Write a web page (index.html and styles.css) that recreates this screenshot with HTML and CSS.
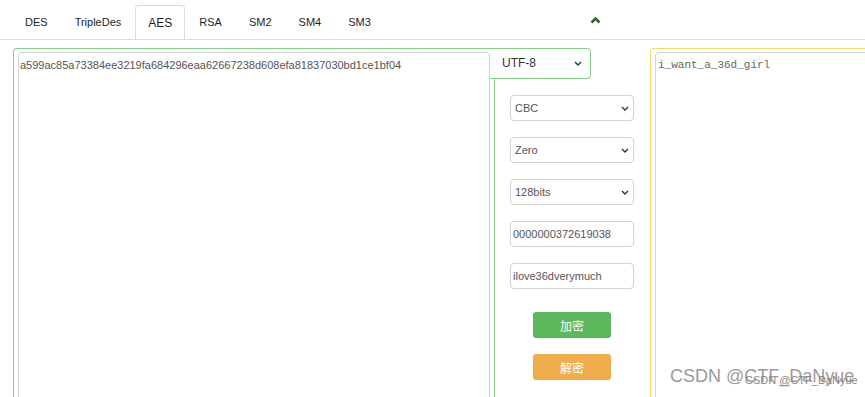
FILE: index.html
```html
<!DOCTYPE html>
<html lang="zh-CN">
<head>
    <meta charset="UTF-8">
    <meta name="viewport" content="width=device-width, initial-scale=1.0">
    <title>在线加密解密</title>
    <link rel="stylesheet" href="styles.css">
</head>
<body>
    <ul class="nav-tabs">
        <li><a href="#">DES</a></li>
        <li><a href="#">TripleDes</a></li>
        <li class="active"><a href="#">AES</a></li>
        <li><a href="#">RSA</a></li>
        <li><a href="#">SM2</a></li>
        <li><a href="#">SM4</a></li>
        <li><a href="#">SM3</a></li>
        <li class="toggle">
            <svg width="11" height="8" viewBox="0 0 11 8"><polyline points="1.5,6.5 5.5,2.5 9.5,6.5" fill="none" stroke="#2a6633" stroke-width="2.6"/></svg>
        </li>
    </ul>

    <div class="workspace">
        <div class="input-panel">
            <textarea class="text-box">a599ac85a73384ee3219fa684296eaa62667238d608efa81837030bd1ce1bf04</textarea>
        </div>

        <div class="side">
            <div class="charset-box">
                <span>UTF-8</span>
                <svg width="8" height="5" viewBox="0 0 8 5"><polyline points="1,1 4,4 7,1" fill="none" stroke="#333" stroke-width="1.4"/></svg>
            </div>
            <div class="options">
                <div class="field select"><span>CBC</span><svg width="8" height="5" viewBox="0 0 8 5"><polyline points="1,1 4,4 7,1" fill="none" stroke="#333" stroke-width="1.4"/></svg></div>
                <div class="field select"><span>Zero</span><svg width="8" height="5" viewBox="0 0 8 5"><polyline points="1,1 4,4 7,1" fill="none" stroke="#333" stroke-width="1.4"/></svg></div>
                <div class="field select"><span>128bits</span><svg width="8" height="5" viewBox="0 0 8 5"><polyline points="1,1 4,4 7,1" fill="none" stroke="#333" stroke-width="1.4"/></svg></div>
                <input class="field" type="text" value="0000000372619038">
                <input class="field" type="text" value="ilove36dverymuch">
                <button class="btn btn-encrypt">加密</button>
                <button class="btn btn-decrypt">解密</button>
            </div>
        </div>

        <div class="output-panel">
            <textarea class="text-box mono">i_want_a_36d_girl</textarea>
        </div>
    </div>

    <div class="watermark">
        <span class="mark-big">CSDN @CTF_DaNyue</span>
        <span class="mark-small">CSDN @CTF_DaNyue</span>
    </div>
</body>
</html>
```

FILE: styles.css
```css
body {
    font-family: 'Liberation Sans', Arial, 'Noto Sans CJK SC', sans-serif;
    margin: 0;
    height: 397px;
    overflow: hidden;
    background: #fff;
    color: #333;
    position: relative;
}
.nav-tabs {
    list-style: none;
    margin: 0;
    padding: 5px 0 0 12px;
    display: flex;
    border-bottom: 1px solid #dcdcdc;
    height: 34px;
}
.nav-tabs li {
    margin-right: 1px;
}
.nav-tabs a {
    display: flex;
    align-items: center;
    height: 34px;
    box-sizing: border-box;
    padding: 0 12px 1px;
    font-size: 11px;
    color: #1e1e1e;
    text-decoration: none;
    border: 1px solid transparent;
    border-bottom: none;
    border-radius: 4px 4px 0 0;
}
.nav-tabs .active a {
    border-color: #dcdcdc;
    font-size: 12px;
    padding-top: 2px;
}
.nav-tabs .toggle {
    margin-left: 205px;
    padding-top: 5px;
}
.workspace {
    display: flex;
    margin-top: 8px;
    padding-left: 13px;
}
.input-panel {
    flex-shrink: 0;
    width: 477px;
    box-sizing: border-box;
    border-left: 1px solid #88cf88;
    border-top: 1px solid #88cf88;
    border-top-left-radius: 4px;
    padding: 3px 0 0 4px;
}
.text-box {
    display: block;
    width: 472px;
    height: 360px;
    box-sizing: border-box;
    border: 1px solid #d2d2d2;
    border-radius: 4px;
    padding: 6px 1px;
    resize: none;
    font-family: 'Liberation Sans', Arial, sans-serif;
    font-size: 11px;
    line-height: 13px;
    color: #555;
    outline: none;
}
.text-box.mono {
    width: 230px;
    font-family: 'Liberation Mono', 'Courier New', monospace;
    padding: 6px 2px;
    color: #666;
}
.side {
    flex-shrink: 0;
    width: 150px;
}
.charset-box {
    width: 101px;
    height: 31px;
    box-sizing: border-box;
    border: 1px solid #88cf88;
    border-left: none;
    border-radius: 0 4px 4px 0;
    display: flex;
    align-items: center;
    justify-content: space-between;
    padding: 0 8px 1px 12px;
    font-size: 12px;
    color: #333;
}
.options {
    margin-left: 4px;
    width: 124px;
    border-left: 1px solid #88cf88;
    padding: 16px 0 40px 15px;
    display: flex;
    flex-direction: column;
    gap: 16px;
}
.field {
    width: 124px;
    height: 26px;
    box-sizing: border-box;
    border: 1px solid #d2d2d2;
    border-radius: 4px;
    font-family: 'Liberation Sans', Arial, sans-serif;
    font-size: 11px;
    color: #555;
    background: #fff;
    margin: 0;
}
.select {
    display: flex;
    align-items: center;
    justify-content: space-between;
    padding: 0 4px 0 4px;
}
input.field {
    padding: 0 2px;
    outline: none;
}
.btn {
    align-self: center;
    width: 78px;
    height: 26px;
    border: none;
    border-radius: 3px;
    color: #fff;
    font-family: 'Noto Sans CJK SC', sans-serif;
    font-size: 12px;
    cursor: pointer;
}
.btn-encrypt {
    background-color: #5cb85c;
    margin-top: 7px;
}
.btn-decrypt {
    background-color: #f0ad4e;
}
.output-panel {
    flex-shrink: 0;
    margin-left: 10px;
    width: 300px;
    box-sizing: border-box;
    border-left: 1px solid #f5d76a;
    border-top: 1px solid #f5d76a;
    border-top-left-radius: 4px;
    padding: 3px 0 0 4px;
}
.watermark {
    position: absolute;
    left: 670px;
    top: 366px;
}
.mark-big {
    font-size: 18px;
    color: #9a9a9a;
}
.mark-small {
    position: absolute;
    left: 75px;
    top: 8px;
    font-size: 11px;
    white-space: nowrap;
    color: #888;
}
```
